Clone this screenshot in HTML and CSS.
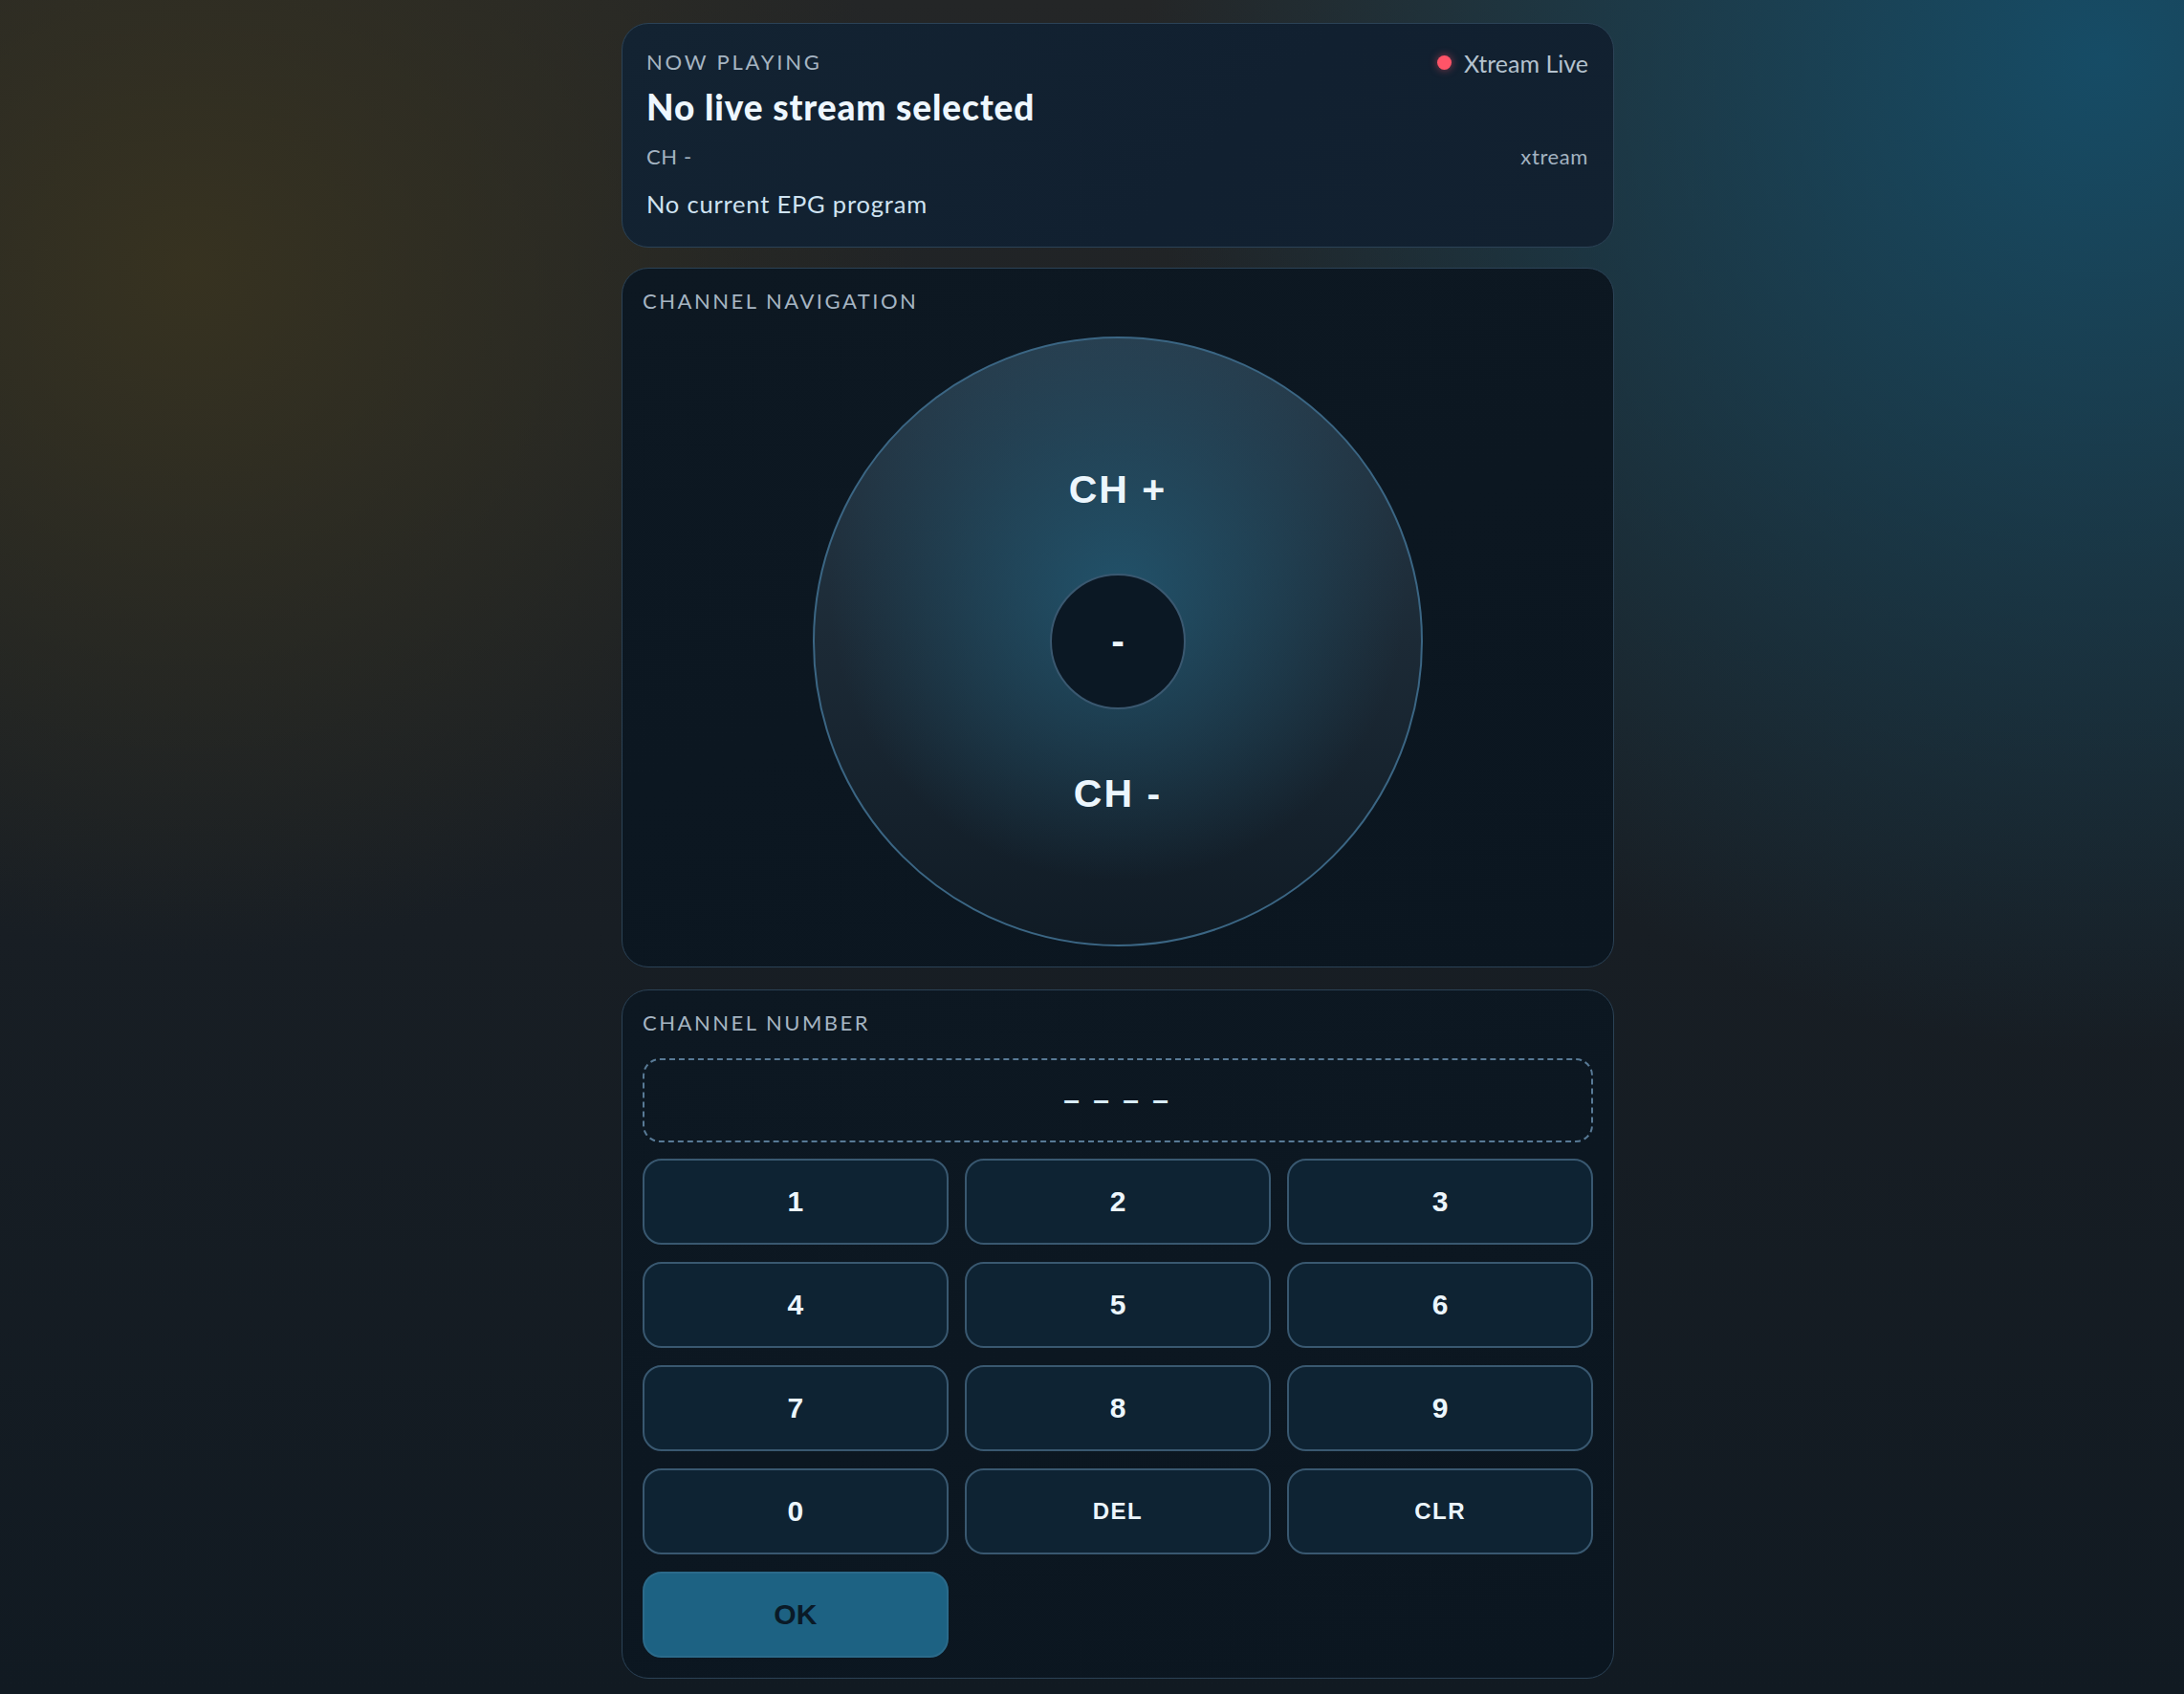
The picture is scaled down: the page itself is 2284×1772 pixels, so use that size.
FILE: index.html
```html
<!DOCTYPE html>
<html lang="en">
<head>
<meta charset="utf-8">
<title>Remote</title>
<link rel="stylesheet" href="styles.css">
</head>
<body>
<main class="app">
  <section class="card now">
    <div class="row top">
      <span class="label">NOW PLAYING</span>
      <span class="status"><span class="dot"></span>Xtream Live</span>
    </div>
    <h1 class="title">No live stream selected</h1>
    <div class="row meta">
      <span>CH -</span>
      <span>xtream</span>
    </div>
    <p class="epg">No current EPG program</p>
  </section>

  <section class="card nav">
    <div class="label">CHANNEL NAVIGATION</div>
    <div class="dial">
      <button class="half up">CH +</button>
      <button class="half down">CH -</button>
      <button class="hub">-</button>
    </div>
  </section>

  <section class="card number">
    <div class="label">CHANNEL NUMBER</div>
    <div class="display">– – – –</div>
    <div class="keys">
      <button class="key">1</button>
      <button class="key">2</button>
      <button class="key">3</button>
      <button class="key">4</button>
      <button class="key">5</button>
      <button class="key">6</button>
      <button class="key">7</button>
      <button class="key">8</button>
      <button class="key">9</button>
      <button class="key">0</button>
      <button class="key small">DEL</button>
      <button class="key small">CLR</button>
      <button class="key ok">OK</button>
    </div>
  </section>
</main>
</body>
</html>
```

FILE: styles.css
```css
html {
  background:
    radial-gradient(ellipse 1050px 1000px at 200px 280px, rgba(56, 51, 32, 0.95), rgba(56, 51, 32, 0) 72%),
    radial-gradient(ellipse 1250px 1300px at 2200px 60px, rgba(22, 76, 102, 1), rgba(22, 76, 102, 0) 80%),
    linear-gradient(180deg, #242627 0%, #181e24 55%, #111a22 100%);
  min-height: 100%;
}

body {
  margin: 0;
  min-height: 100vh;
  font-family: "Lato", "Noto Sans", sans-serif;
  color: #e8f2fa;
}

.app {
  width: 1038px;
  margin-left: 650px;
  padding-top: 24px;
  display: flex;
  flex-direction: column;
}

.card {
  box-sizing: border-box;
  border: 1.5px solid #2b4256;
  border-radius: 28px;
  background: linear-gradient(160deg, #0d1822 0%, #0b1620 100%);
}

.label {
  font-size: 22px;
  line-height: 26px;
  letter-spacing: 2.5px;
  color: #a6b5c2;
  text-transform: uppercase;
}

/* Now playing */
.now {
  padding: 27px 26px 30px 25px;
  background: linear-gradient(135deg, #132332 0%, #112030 60%, #122130 100%);
}

.now .label {
  letter-spacing: 2.8px;
}

.row {
  display: flex;
  justify-content: space-between;
  align-items: baseline;
  line-height: 26px;
}

.status {
  display: flex;
  align-items: center;
  gap: 13px;
  font-size: 25px;
  color: #b4c2ce;
}

.dot {
  width: 15px;
  height: 15px;
  border-radius: 50%;
  background: #ff5468;
  box-shadow: 0 0 8px rgba(255, 84, 104, 0.55);
}

.title {
  margin: 11px 0 0;
  font-size: 37px;
  line-height: 44px;
  font-weight: 900;
  letter-spacing: 0.9px;
  color: #eef7ff;
}

.meta {
  margin-top: 17px;
  font-size: 22px;
  letter-spacing: 0.6px;
  color: #a3b3c1;
}

.epg {
  margin: 21px 0 0;
  font-size: 25.5px;
  line-height: 30px;
  letter-spacing: 0.8px;
  color: #cfe3f1;
}

/* Navigation */
.nav {
  margin-top: 21px;
  padding: 21px 21px 21px;
}

.dial {
  position: relative;
  width: 638px;
  height: 638px;
  margin: 24px auto 0;
  box-sizing: border-box;
  border: 2px solid #3b6684;
  border-radius: 50%;
  overflow: hidden;
  display: flex;
  flex-direction: column;
  background:
    radial-gradient(circle at 50% 42%, rgba(34, 88, 114, 0.85) 0%, rgba(34, 88, 114, 0.45) 30%, rgba(34, 88, 114, 0) 62%),
    linear-gradient(180deg, #283d4d 0%, #1c2a36 50%, #101b25 100%);
}

button {
  font-family: "Liberation Sans", Arial, sans-serif;
  font-weight: 700;
  color: #ecf6fd;
  background: none;
  border: none;
  padding: 0;
  margin: 0;
  cursor: pointer;
}

.half {
  flex: 1;
  font-size: 41px;
  letter-spacing: 2px;
  display: flex;
  align-items: center;
  justify-content: center;
}

.half.up {
  padding-top: 2px;
}

.half.down {
  padding-top: 4px;
}

.hub {
  position: absolute;
  left: 50%;
  top: 50%;
  width: 142px;
  height: 142px;
  transform: translate(-50%, -50%);
  border-radius: 50%;
  border: 2px solid #3a5870;
  background: #0b1824;
  font-size: 41px;
  line-height: 1;
}

/* Channel number */
.number {
  margin-top: 23px;
  padding: 21px 21px 21px;
}

.display {
  margin-top: 24px;
  height: 88px;
  box-sizing: border-box;
  border: 2px dashed #587a96;
  border-radius: 18px;
  display: flex;
  align-items: center;
  justify-content: center;
  font-family: "Liberation Sans", Arial, sans-serif;
  font-weight: 700;
  font-size: 30px;
  color: #d8ecfa;
  word-spacing: 6px;
  padding-right: 4px;
}

.keys {
  margin-top: 17px;
  display: grid;
  grid-template-columns: repeat(3, 1fr);
  grid-auto-rows: 90px;
  column-gap: 17.5px;
  row-gap: 18px;
}

.key {
  border: 2px solid #395870;
  border-radius: 20px;
  background: #0e2333;
  font-size: 30px;
}

.key.small {
  font-size: 24px;
  letter-spacing: 1.5px;
}

.key.ok {
  background: #1d6283;
  border-color: #2b6a8a;
  color: #0a1a27;
}
```
